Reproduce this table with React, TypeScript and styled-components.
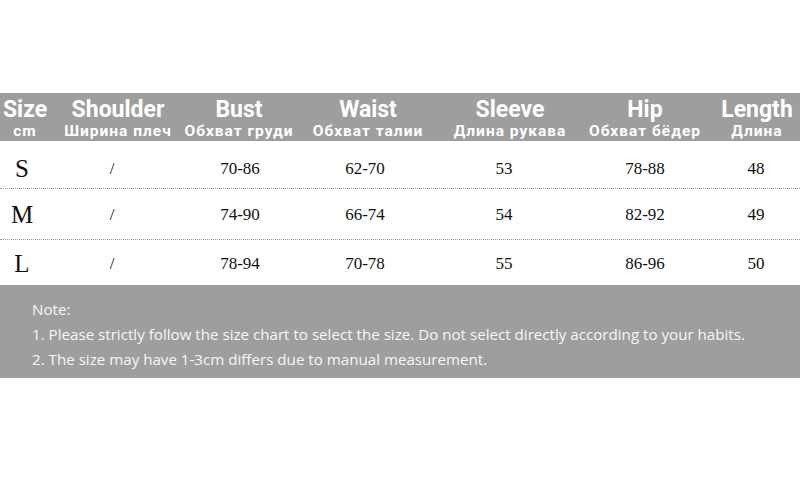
import React from 'react';
import styled, { createGlobalStyle } from 'styled-components';

const GlobalStyle = createGlobalStyle`
  html, body {
    margin: 0;
    padding: 0;
    background: #ffffff;
  }
`;

const HEAD_COLUMNS = '50px 136px 106px 152px 132px 138px 86px';
const DATA_COLUMNS = '44px 136px 120px 130px 148px 134px 88px';

const Page = styled.div`
  width: 800px;
  height: 480px;
  padding-top: 93px;
  box-sizing: border-box;
  background: #ffffff;
`;

const HeaderRow = styled.div`
  display: grid;
  grid-template-columns: ${HEAD_COLUMNS};
  height: 48px;
  padding-top: 5px;
  box-sizing: border-box;
  background: #9e9e9e;
  color: #ffffff;
  font-family: Roboto, "Liberation Sans", sans-serif;
  font-weight: 700;
`;

const HeaderCell = styled.div`
  display: flex;
  flex-direction: column;
  align-items: center;
  white-space: nowrap;
`;

const HeaderTitle = styled.div`
  font-size: 23px;
  line-height: 23px;
`;

const HeaderSub = styled.div`
  font-size: 15.5px;
  letter-spacing: 1px;
  line-height: 18px;
  margin-top: 1px;
`;

const DataRow = styled.div<{ height: number; offset: number; last?: boolean }>`
  display: grid;
  grid-template-columns: ${DATA_COLUMNS};
  height: ${(p) => p.height}px;
  padding-top: ${(p) => p.offset}px;
  box-sizing: border-box;
  align-items: center;
  border-bottom: ${(p) => (p.last ? 'none' : '1px dotted #9a9a9a')};
  font-family: "Liberation Serif", "Times New Roman", serif;
  color: #111111;
`;

const Cell = styled.div`
  text-align: center;
  font-size: 17px;
`;

const SizeCell = styled(Cell)`
  font-size: 25px;
`;

const NoteBox = styled.div`
  height: 93px;
  background: #9e9e9e;
  color: #f7f7f7;
  padding: 12px 0 0 32px;
  box-sizing: border-box;
  font-family: "Open Sans", "Noto Sans", sans-serif;
  font-size: 15.15px;
  line-height: 25px;
`;

const headers = [
  ['Size', 'cm'],
  ['Shoulder', 'Ширина плеч'],
  ['Bust', 'Обхват груди'],
  ['Waist', 'Обхват талии'],
  ['Sleeve', 'Длина рукава'],
  ['Hip', 'Обхват бёдер'],
  ['Length', 'Длина'],
];

const rows = [
  { h: 48, offset: 8, cells: ['S', '/', '70-86', '62-70', '53', '78-88', '48'] },
  { h: 51, offset: 2, cells: ['M', '/', '74-90', '66-74', '54', '82-92', '49'] },
  { h: 45, offset: 2, cells: ['L', '/', '78-94', '70-78', '55', '86-96', '50'] },
];

export default function App() {
  return (
    <Page>
      <GlobalStyle />
      <HeaderRow>
        {headers.map(([title, sub]) => (
          <HeaderCell key={title}>
            <HeaderTitle>{title}</HeaderTitle>
            <HeaderSub>{sub}</HeaderSub>
          </HeaderCell>
        ))}
      </HeaderRow>
      {rows.map((row, i) => (
        <DataRow key={row.cells[0]} height={row.h} offset={row.offset} last={i === rows.length - 1}>
          {row.cells.map((c, j) =>
            j === 0 ? <SizeCell key={j}>{c}</SizeCell> : <Cell key={j}>{c}</Cell>
          )}
        </DataRow>
      ))}
      <NoteBox>
        <div>Note:</div>
        <div>1. Please strictly follow the size chart to select the size. Do not select directly according to your habits.</div>
        <div>2. The size may have 1-3cm differs due to manual measurement.</div>
      </NoteBox>
    </Page>
  );
}
